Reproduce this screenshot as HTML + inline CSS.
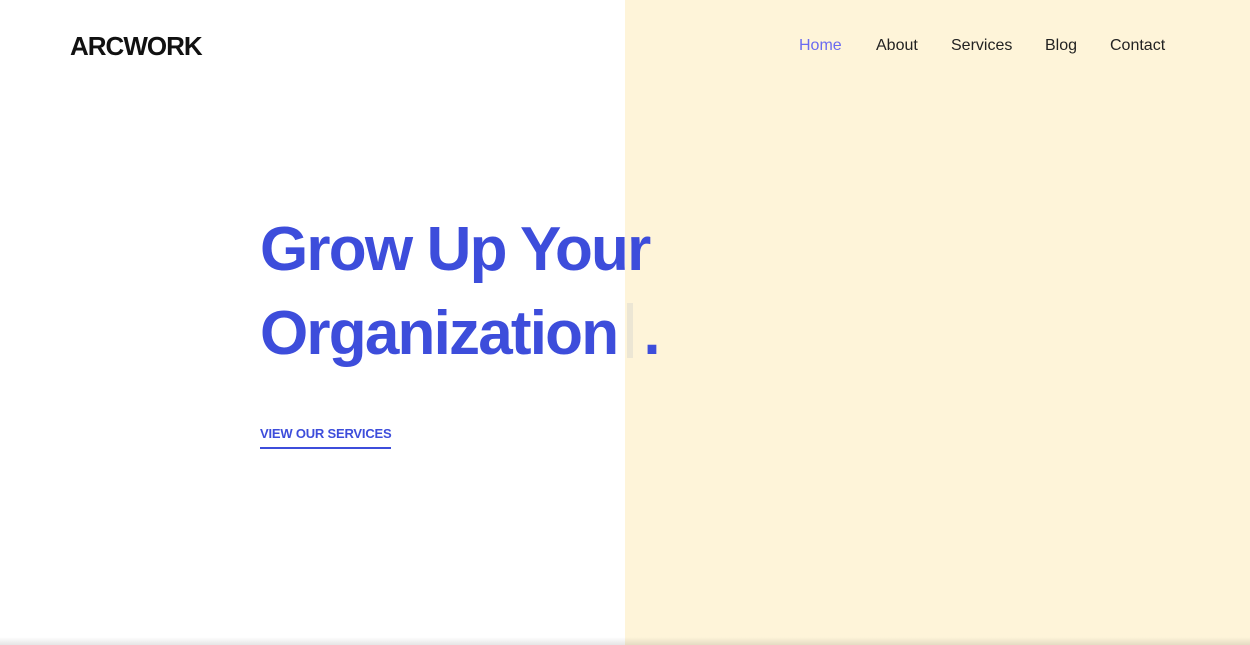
<!DOCTYPE html>
<html><head><meta charset="utf-8"><style>
*{margin:0;padding:0;box-sizing:border-box}
body{width:1250px;height:645px;overflow:hidden;background:#fff;font-family:"Liberation Sans",sans-serif;position:relative}
.right{position:absolute;left:625px;top:0;width:625px;height:645px;background:#fef4d9}
.shadow{position:absolute;left:0;bottom:0;width:1250px;height:8px;background:linear-gradient(rgba(0,0,0,0),rgba(0,0,0,0.1))}
.logo{position:absolute;left:70px;top:31px;font-size:26px;font-weight:bold;color:#111;letter-spacing:-1px}
nav{position:absolute;top:37px;left:0;width:1250px;font-size:16px;color:#222}
nav span{position:absolute}
h1{position:absolute;left:260px;top:208px;font-size:62px;line-height:84px;font-weight:bold;color:#3d4ddb;letter-spacing:-1.8px}
.cur{display:inline-block;width:6px;height:55px;background:#ece6d4;vertical-align:-4px;margin:0 10px 0 10px}
.btn{position:absolute;left:260px;top:426px;font-size:13px;font-weight:bold;color:#3d4ddb;padding-bottom:6px;border-bottom:2px solid #3d4ddb;letter-spacing:-0.2px}
</style></head><body>
<div class="right"></div>
<div class="logo">ARCWORK</div>
<nav><span style="left:799px;color:#6a6af0">Home</span><span style="left:876px">About</span><span style="left:951px">Services</span><span style="left:1045px">Blog</span><span style="left:1110px">Contact</span></nav>
<h1>Grow Up Your<br>Organization<span class="cur"></span>.</h1>
<div class="btn">VIEW OUR SERVICES</div>
<div class="shadow"></div>
</body></html>
